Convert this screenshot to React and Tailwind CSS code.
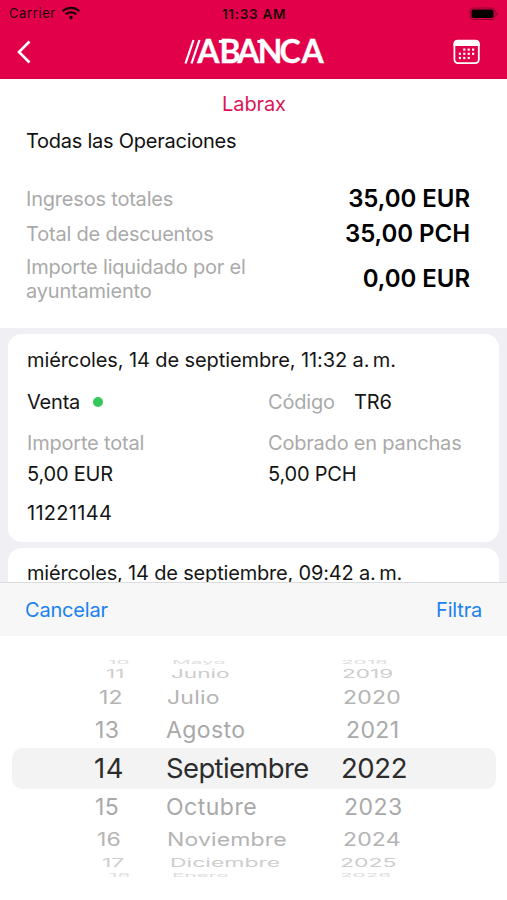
import { FaWifi } from "react-icons/fa";

const totals = [
  { label: "Ingresos totales", value: "35,00 EUR", row: "h-[35px]" },
  { label: "Total de descuentos", value: "35,00 PCH", row: "h-[35px]" },
  {
    label: "Importe liquidado por el ayuntamiento",
    value: "0,00 EUR",
    row: "h-[56px]",
  },
];

const wheel = [
  {
    values: ["10", "Mayo", "2018"],
    row: "h-[7px] leading-[3px] pl-[108px] grid-cols-[64px_169px_auto] text-[#dcdcdc]",
    text: "scale-x-[0.9] scale-y-[0.22]",
  },
  {
    values: ["11", "Junio", "2019"],
    row: "h-[15px] leading-[16px] pl-[106px] grid-cols-[65px_171px_auto] text-[#cdcdcd]",
    text: "scale-x-[0.98] scale-y-[0.5]",
  },
  {
    values: ["12", "Julio", "2020"],
    row: "h-[32px] leading-[34px] pl-[99px] grid-cols-[68px_176px_auto] text-[#b4b4b4]",
    text: "scale-y-[0.8] tracking-[0.2px]",
  },
  {
    values: ["13", "Agosto", "2021"],
    row: "h-[35px] leading-[35px] pl-[95px] grid-cols-[71px_180px_auto] text-[#a9a9a9]",
    text: "tracking-[0.4px]",
  },
  {
    values: ["14", "Septiembre", "2022"],
    row: "h-[41px] leading-[41px] pl-[94px] grid-cols-[72px_175px_auto] text-[#2c2c2c]",
    text: "text-[27.5px] tracking-[-0.65px] first:tracking-[0.6px] last:tracking-[-0.4px]",
  },
  {
    values: ["15", "Octubre", "2023"],
    row: "h-[34px] leading-[36px] pl-[95px] grid-cols-[71px_178px_auto] text-[#a9a9a9]",
    text: "tracking-[0.5px]",
  },
  {
    values: ["16", "Noviembre", "2024"],
    row: "h-[32px] leading-[34px] pl-[97px] grid-cols-[70px_176px_auto] text-[#b4b4b4]",
    text: "scale-y-[0.8] tracking-[0.15px]",
  },
  {
    values: ["17", "Diciembre", "2025"],
    row: "h-[15px] leading-[17px] pl-[102px] grid-cols-[68px_170px_auto] text-[#cdcdcd]",
    text: "scale-y-[0.5]",
  },
  {
    values: ["18", "Enero", "2026"],
    row: "h-[7px] leading-[11px] pl-[109px] grid-cols-[63px_168px_auto] text-[#dcdcdc]",
    text: "scale-x-[0.9] scale-y-[0.22]",
  },
];

const Logo = () => (
  <svg
    width="152"
    height="40"
    viewBox="0 0 152 40"
    className="block overflow-visible"
  >
    <path
      d="M12.5 31.5 L20.5 8 M18.5 31.5 L26.5 8"
      stroke="white"
      strokeWidth="2.2"
      fill="none"
    />
    <text
      x="24.2 46.4 64.2 84.8 106.6 128.6"
      y="31.2"
      fill="white"
      stroke="white"
      strokeWidth="0.3"
      className="font-['Lato',sans-serif] font-bold text-[32px] leading-none"
    >
      ABANCA
    </text>
    <path d="M45.8 9.6 h5 M84.4 9.6 h5" stroke="white" strokeWidth="3" />
  </svg>
);

const CalendarIcon = () => (
  <svg width="28" height="26" viewBox="0 0 28 26" className="block">
    <rect
      x="1.4"
      y="1.7"
      width="24.4"
      height="22.4"
      rx="3.5"
      fill="none"
      stroke="white"
      strokeWidth="1.8"
    />
    <path d="M0.6 7 V4.5 Q0.6 1 4.5 1 H22.7 Q26.6 1 26.6 4.5 V7 Z" fill="white" />
    <g fill="white">
      {[10.5, 14.7, 18.9].map((y, i) =>
        [6, 10.4, 14.8, 19.2].map((x, j) =>
          (i === 0 && j === 0) || (i === 2 && j === 3) ? null : (
            <rect key={`${x}-${y}`} x={x - 0.2} y={y - 1} width="2.2" height="2.2" />
          )
        )
      )}
    </g>
  </svg>
);

const Header = () => (
  <header className="h-[79px] bg-[#e3004a]">
    <div className="grid h-[28px] grid-cols-3 items-center pl-[9px] pr-[8px] text-[13px] text-[#1c0009]">
      <div className="flex items-center gap-[6px]">
        <span className="tracking-[0.6px]">Carrier</span>
        <FaWifi size={18} className="-mt-[3px]" />
      </div>
      <span className="text-center text-[13.5px] font-semibold tracking-[0.7px]">
        11:33 AM
      </span>
      <svg width="30" height="14" viewBox="0 0 30 14" className="-mt-[1px] justify-self-end">
        <rect x="1" y="1" width="25" height="11.5" rx="3" fill="none" stroke="#000" strokeOpacity="0.35" />
        <rect x="2.5" y="2.5" width="22" height="8.5" rx="1.8" fill="#000" />
        <path d="M27.5 5 v4 q1.5 -0.7 1.5 -2 t-1.5 -2" fill="#000" fillOpacity="0.4" />
      </svg>
    </div>
    <div className="grid h-[48px] grid-cols-[1fr_auto_1fr] items-center pl-[16px] pr-[26px]">
      <svg width="16" height="24" viewBox="0 0 16 24" fill="none">
        <path d="M13.5 1.5 L3 12 L13.5 22.5" stroke="white" strokeWidth="2.6" />
      </svg>
      <Logo />
      <div className="justify-self-end">
        <CalendarIcon />
      </div>
    </div>
  </header>
);

const Summary = () => (
  <section className="h-[249px] bg-white pl-[26px] pr-[37px] text-[20px]">
    <h1 className="h-[49px] pt-[10px] pl-[12px] text-center leading-[30px] tracking-[-0.1px] text-[#dc1457]">
      Labrax
    </h1>
    <p className="h-[53px] leading-[27px] tracking-[-0.25px] text-[#111]">
      Todas las Operaciones
    </p>
    {totals.map((total) => (
      <div
        key={total.label}
        className={`flex items-center justify-between ${total.row}`}
      >
        <span className="w-[240px] leading-[24px] tracking-[-0.2px] text-[#aaa]">
          {total.label}
        </span>
        <span className="text-[24px] font-semibold tracking-[-0.05px] text-black">
          {total.value}
        </span>
      </div>
    ))}
  </section>
);

const Operation = () => (
  <article className="h-[208px] shrink-0 rounded-[14px] bg-white px-[19px] pt-[11px]">
    <p className="h-[42px] leading-[30px] tracking-[-0.1px]">
      miércoles, 14 de septiembre, 11:32 a.&#8201;m.
    </p>
    <div className="grid h-[41px] grid-cols-[241px_auto] leading-[30px]">
      <div className="flex h-[30px] items-center">
        <span className="w-[66px]">Venta</span>
        <span className="h-[10px] w-[10px] rounded-full bg-[#34c759]" />
      </div>
      <div className="flex">
        <span className="w-[86px] text-[#aaa]">Código</span>
        <span>TR6</span>
      </div>
    </div>
    <div className="grid grid-cols-[241px_auto] leading-[31px]">
      <span className="text-[#aaa]">Importe total</span>
      <span className="text-[#aaa]">Cobrado en panchas</span>
      <span>5,00 EUR</span>
      <span>5,00 PCH</span>
    </div>
    <p className="mt-[8px] leading-[31px] tracking-[0.3px]">11221144</p>
  </article>
);

const Picker = () => (
  <section className="h-[318px] shrink-0 bg-white">
    <div className="flex h-[54px] items-center justify-between border-t border-[#dcdcdf] bg-[#f7f7f7] pl-[25px] pr-[25px] text-[20px] tracking-[-0.2px] text-[#1a82f0]">
      <button>Cancelar</button>
      <button>Filtra</button>
    </div>
    <div className="mt-[23px] h-[218px] overflow-hidden pl-[12px] pr-[11px]">
      {wheel.map((item) => (
        <div
          key={item.values[0]}
          className={
            item.values[0] === "14" ? "rounded-[10px] bg-[#f3f3f3]" : ""
          }
        >
          <div className={`-ml-[12px] grid text-[23px] ${item.row}`}>
            {item.values.map((value) => (
              <span key={value} className={`origin-left ${item.text}`}>
                {value}
              </span>
            ))}
          </div>
        </div>
      ))}
    </div>
  </section>
);

export default function App() {
  return (
    <div className="flex h-[900px] w-[507px] flex-col overflow-hidden bg-white font-['Inter',sans-serif]">
      <Header />
      <Summary />
      <main className="flex h-[254px] flex-col gap-[6px] overflow-hidden bg-[#f0f0f4] pt-[6px] pl-[8px] pr-[8px] text-[20px] tracking-[-0.2px] text-[#151515]">
        <Operation />
        <article className="h-[60px] shrink-0 rounded-t-[14px] bg-white px-[19px] pt-[10px]">
          <p className="leading-[30px] tracking-[-0.18px]">
            miércoles, 14 de septiembre, 09:42 a.&#8201;m.
          </p>
        </article>
      </main>
      <Picker />
    </div>
  );
}
